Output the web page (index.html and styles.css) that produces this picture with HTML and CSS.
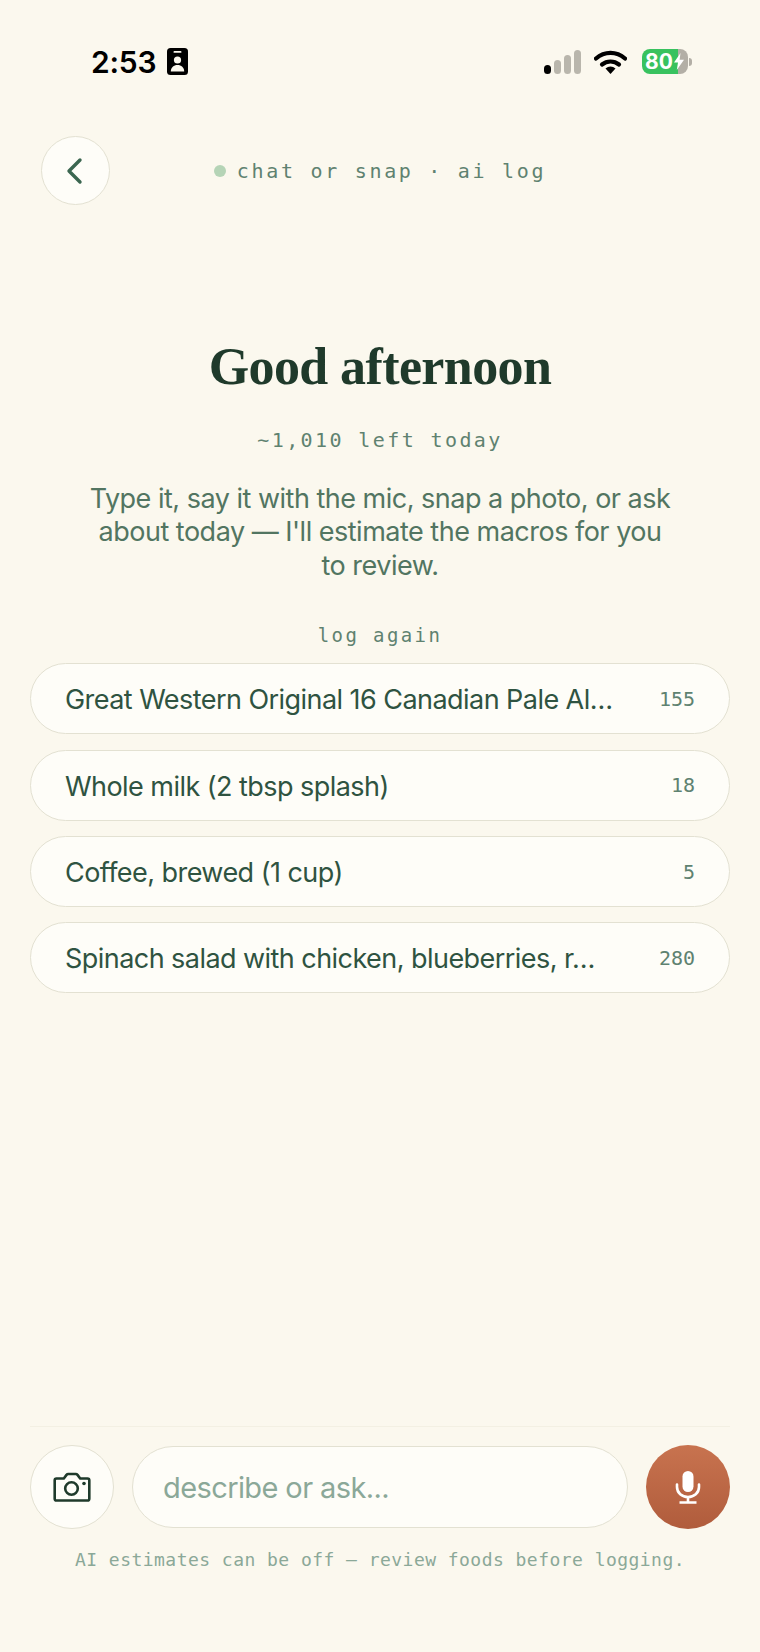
FILE: index.html
```html
<!DOCTYPE html>
<html lang="en">
  <head>
    <meta charset="UTF-8" />
    <meta name="viewport" content="width=device-width, initial-scale=1.0" />
    <title>AI Log</title>
    <link rel="stylesheet" href="styles.css">
  </head>
  <body>
    <div class="screen">
      <div class="status-bar">
        <div class="status-left">
          <span class="clock">2:53</span>
          <svg class="id-badge" width="21" height="27" viewBox="0 0 21 27">
            <rect width="21" height="27" rx="3.5" fill="#000" />
            <rect x="6.5" y="3" width="8" height="1.8" rx="0.9" fill="#fbf8ee" />
            <circle cx="10.5" cy="12" r="3.6" fill="#fbf8ee" />
            <path d="M3.8 23.5c0-4 3-6.5 6.7-6.5s6.7 2.500 6.700 6.500z" fill="#fbf8ee" />
          </svg>
        </div>
        <div class="status-right">
          <svg width="37" height="24" viewBox="0 0 37 24">
            <rect x="0" y="15" width="7" height="9" rx="3.500" fill="#000" />
            <rect x="10" y="10" width="7" height="14" rx="3.500" fill="#b9b6ac" />
            <rect x="20" y="5" width="7" height="19" rx="3.500" fill="#b9b6ac" />
            <rect x="30" y="0" width="7" height="24" rx="3.500" fill="#b9b6ac" />
          </svg>
          <svg class="wifi" width="33" height="24" viewBox="0 0 33 24">
            <path d="M2 8.500C10.500 1 22.500 1 31 8.500" fill="none" stroke="#000" stroke-width="4.200" stroke-linecap="round" />
            <path d="M8 14.500C13 10.500 20 10.500 25 14.500" fill="none" stroke="#000" stroke-width="4.200" stroke-linecap="round" />
            <path d="M11.500 18.500C14.500 15.800 18.500 15.800 21.500 18.500L16.500 24z" fill="#000" />
          </svg>
          <div class="battery">
            <div class="battery-body">
              <span class="battery-level">80</span>
              <svg class="bolt" width="10" height="17" viewBox="0 0 10 17">
                <path d="M6.500 0L0 9.500h4L2.800 17 10 6.800H5.600z" fill="#fff" />
              </svg>
            </div>
            <div class="battery-cap"></div>
          </div>
        </div>
      </div>

      <div class="top-row">
        <button class="round-btn back-btn">
          <svg width="20" height="28" viewBox="0 0 20 28">
            <path d="M16 3L5 14l11 11" fill="none" stroke="#3b6650" stroke-width="3.400" stroke-linecap="round" stroke-linejoin="round" />
          </svg>
        </button>
        <div class="mode-label"><span class="dot"></span>chat or snap · ai log</div>
      </div>

      <div class="intro">
        <h1>Good afternoon</h1>
        <div class="left-today">~1,010 left today</div>
        <p>Type it, say it with the mic, snap a photo, or ask about today — I'll estimate the macros for you to review.</p>
        <div class="section-label">log again</div>
      </div>

      <div class="recent-list">
        <div class="recent-row">
          <span class="recent-name">Great Western Original 16 Canadian Pale Al…</span>
          <span class="recent-cal">155</span>
        </div>
        <div class="recent-row">
          <span class="recent-name">Whole milk (2 tbsp splash)</span>
          <span class="recent-cal">18</span>
        </div>
        <div class="recent-row">
          <span class="recent-name">Coffee, brewed (1 cup)</span>
          <span class="recent-cal">5</span>
        </div>
        <div class="recent-row">
          <span class="recent-name">Spinach salad with chicken, blueberries, r…</span>
          <span class="recent-cal">280</span>
        </div>
      </div>

      <div class="composer">
        <div class="composer-row">
          <button class="round-btn camera-btn">
            <svg width="38" height="30" viewBox="0 0 38 30">
              <path d="M3.500 6.500h7.300l2.700-3.600c.4-.5 1-.9 1.700-.9h7.600c.7 0 1.300.4 1.700.9l2.700 3.600h7.300c1 0 1.800.8 1.800 1.800v18.400c0 1-.8 1.800-1.800 1.800H3.500c-1 0-1.800-.8-1.800-1.800V8.300c0-1 .8-1.800 1.800-1.800z" fill="none" stroke="#1f3a2b" stroke-width="2.600" stroke-linejoin="round" />
              <circle cx="18.500" cy="16.500" r="6.300" fill="none" stroke="#1f3a2b" stroke-width="2.600" />
              <circle cx="31" cy="11.500" r="1.800" fill="#1f3a2b" />
            </svg>
          </button>
          <input class="message-input" type="text" placeholder="describe or ask..." />
          <button class="round-btn mic-btn">
            <svg width="26" height="34" viewBox="0 0 26 34">
              <rect x="7.500" y="1" width="11" height="21" rx="5.500" fill="#fff" />
              <path d="M2 14.500v2.500c0 6 5 10 11 10s11-4 11-10v-2.500" fill="none" stroke="#fff" stroke-width="2.600" stroke-linecap="round" />
              <path d="M13 27v5.500M4.500 32.500h17" fill="none" stroke="#fff" stroke-width="2.600" />
            </svg>
          </button>
        </div>
        <div class="disclaimer">AI estimates can be off — review foods before logging.</div>
      </div>
    </div>
  </body>
</html>
```

FILE: styles.css
```css
* {
  box-sizing: border-box;
}

body {
  margin: 0;
  background-color: #fbf8ee;
  font-family: Inter, "Open Sans", sans-serif;
}

.screen {
  display: flex;
  flex-direction: column;
  width: 760px;
  height: 1652px;
  overflow: hidden;
}

.status-bar {
  display: flex;
  justify-content: space-between;
  align-items: center;
  height: 27px;
  margin-top: 48px;
  padding: 0 68px 0 91px;
}

.status-left {
  display: flex;
  align-items: center;
  gap: 11px;
}

.clock {
  font-size: 30px;
  font-weight: 600;
  letter-spacing: -0.2px;
  color: #000;
}

.status-right {
  display: flex;
  align-items: center;
}

.wifi {
  margin-left: 13px;
}

.battery {
  display: flex;
  align-items: center;
  margin-left: 15px;
}

.battery-body {
  display: flex;
  align-items: center;
  gap: 0;
  width: 46px;
  height: 25px;
  padding-left: 3px;
  border-radius: 8px;
  background: linear-gradient(to right, #38c25f 0, #38c25f 36px, #b3afa6 36px);
}

.battery-level {
  font-size: 21px;
  font-weight: 700;
  color: #fff;
}

.bolt {
  margin-left: 1px;
}

.battery-cap {
  width: 3px;
  height: 8px;
  margin-left: 1px;
  border-radius: 0 3px 3px 0;
  background-color: #b3afa6;
}

.round-btn {
  display: flex;
  justify-content: center;
  align-items: center;
  padding: 0;
  border: 1.5px solid #e3e1d2;
  border-radius: 50%;
  background-color: #fefdf8;
}

.top-row {
  display: grid;
  grid-template-columns: 68px 1fr 68px;
  align-items: center;
  margin-top: 61px;
  padding: 0 41px;
}

.back-btn {
  width: 69px;
  height: 69px;
  padding-right: 4px;
}

.mode-label {
  display: flex;
  justify-content: center;
  align-items: center;
  font-family: "DejaVu Sans Mono", monospace;
  font-size: 20px;
  letter-spacing: 2.7px;
  color: #5f8270;
}

.dot {
  width: 12px;
  height: 12px;
  margin-right: 11px;
  border-radius: 50%;
  background-color: #b5d4b6;
}

.intro {
  display: flex;
  flex-direction: column;
  align-items: center;
  margin-top: 129px;
  text-align: center;
}

h1 {
  margin: 0;
  font-family: "Liberation Serif", serif;
  font-size: 52px;
  font-weight: 700;
  line-height: 66px;
  letter-spacing: -0.6px;
  color: #1f3a2b;
}

.left-today {
  margin-top: 27px;
  font-family: "DejaVu Sans Mono", monospace;
  font-size: 20px;
  line-height: 26px;
  letter-spacing: 2.4px;
  color: #5f8270;
}

.intro p {
  width: 585px;
  margin: 29px 0 0;
  font-size: 27px;
  line-height: 33.4px;
  letter-spacing: -0.5px;
  color: #527561;
}

.section-label {
  margin-top: 41px;
  font-family: "DejaVu Sans Mono", monospace;
  font-size: 19px;
  line-height: 24px;
  letter-spacing: 2.4px;
  color: #5f8270;
}

.recent-list {
  display: flex;
  flex-direction: column;
  gap: 15.4px;
  margin-top: 16px;
  padding: 0 30px;
}

.recent-row {
  display: flex;
  justify-content: space-between;
  align-items: center;
  gap: 36px;
  height: 71px;
  padding: 0 34px;
  border: 1.5px solid #e3e1d2;
  border-radius: 36px;
  background-color: #fefdf8;
}

.recent-name {
  padding-top: 2px;
  white-space: nowrap;
  font-size: 27px;
  letter-spacing: -0.55px;
  color: #2f5341;
}

.recent-cal {
  font-family: "DejaVu Sans Mono", monospace;
  font-size: 20px;
  color: #5f8270;
}

.composer {
  margin: auto 30px 0;
  padding-top: 18px;
  padding-bottom: 80px;
  border-top: 1.5px solid #f3f0e3;
}

.composer-row {
  display: flex;
  align-items: center;
  gap: 18px;
}

.camera-btn {
  flex: none;
  width: 84px;
  height: 84px;
}

.message-input {
  flex: 1;
  min-width: 0;
  height: 82px;
  padding: 0 30px;
  border: 1.5px solid #e3e1d2;
  border-radius: 41px;
  outline: none;
  background-color: #fefdf8;
  font-family: Inter, "Open Sans", sans-serif;
  font-size: 29px;
  letter-spacing: -0.6px;
}

.message-input::placeholder {
  color: #8ba898;
  opacity: 1;
}

.mic-btn {
  flex: none;
  width: 84px;
  height: 84px;
  border: none;
  background: linear-gradient(to bottom, #c8734f, #b05c3c);
}

.disclaimer {
  margin-top: 19px;
  font-family: "DejaVu Sans Mono", monospace;
  font-size: 18px;
  line-height: 24px;
  letter-spacing: 0.46px;
  text-align: center;
  color: #8ba898;
}
```
